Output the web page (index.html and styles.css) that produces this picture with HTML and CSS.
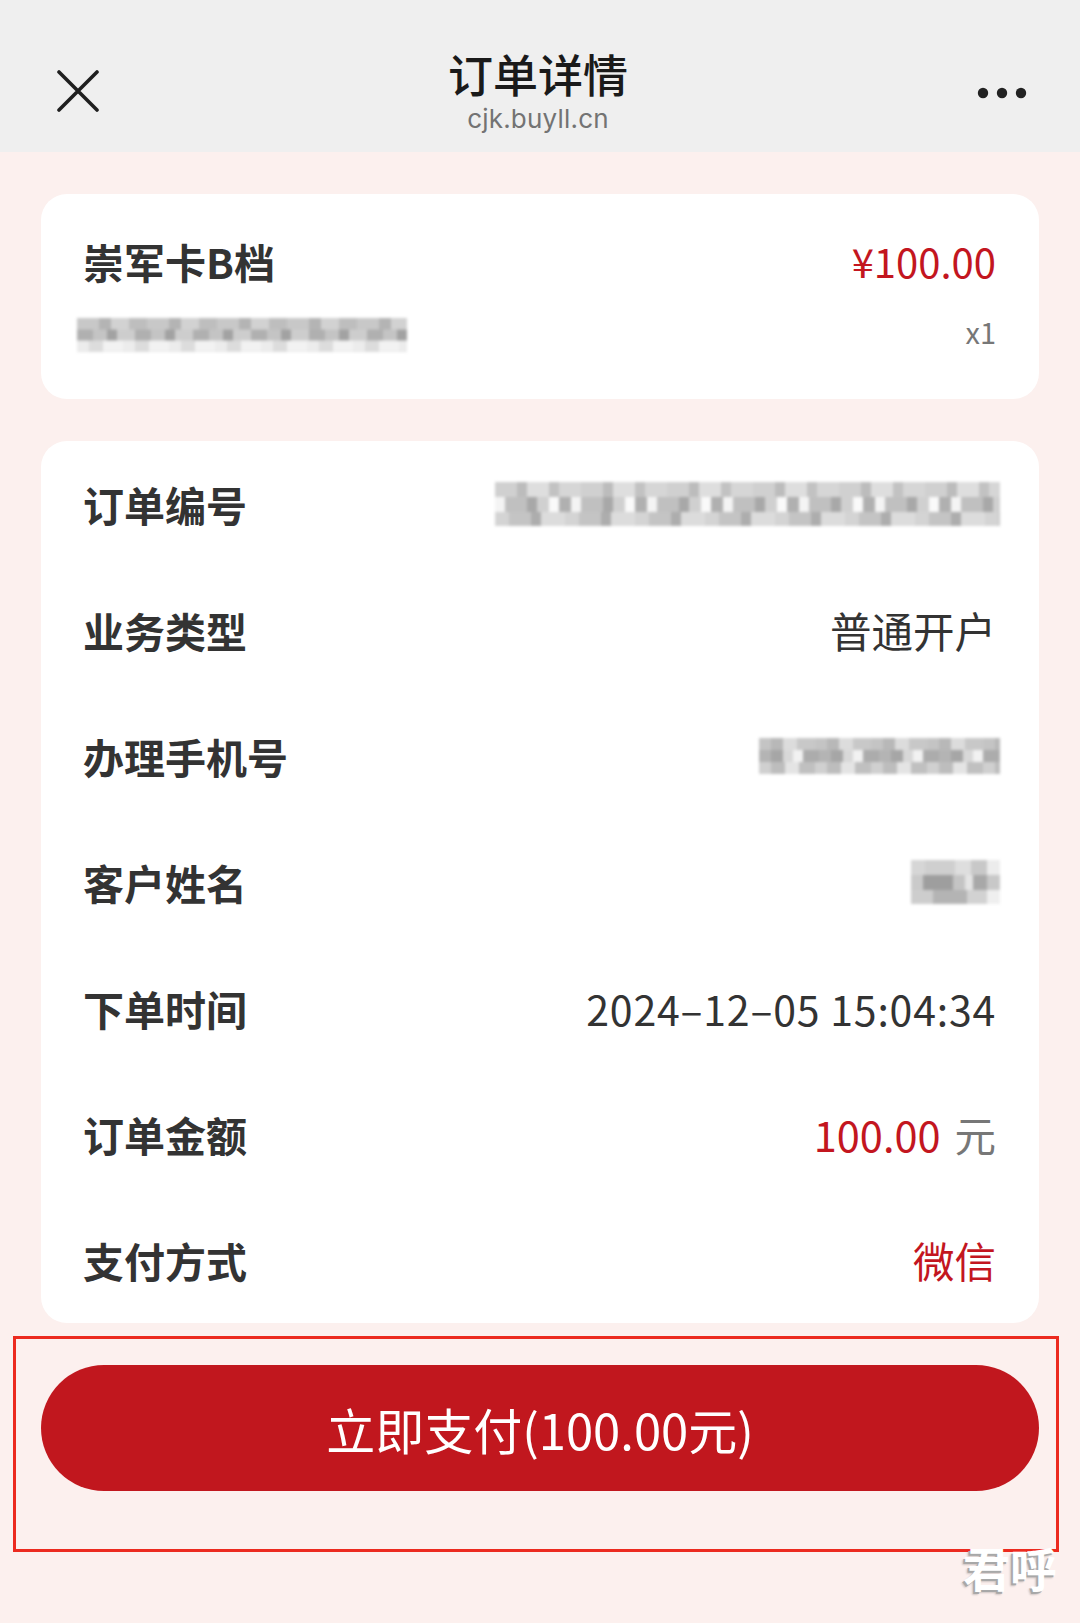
FILE: index.html
```html
<!DOCTYPE html>
<html>
<head>
<meta charset="utf-8">
<title>订单详情</title>
<link rel="stylesheet" href="styles.css">
</head>
<body>

<div class="page">
	<!-- top bar of the webview -->
	<div class="topbar">
		<div class="topbar-left">
			<svg class="close-icon" width="42" height="42" viewBox="0 0 42 42">
				<path d="M2 2 L40 40 M40 2 L2 40" stroke="#1f1f1f" stroke-width="3.6" stroke-linecap="round" fill="none"/>
			</svg>
		</div>
		<div class="topbar-title">
			<div class="title">订单详情</div>
			<div class="subtitle">cjk.buyll.cn</div>
		</div>
		<div class="topbar-right">
			<svg class="more-icon" width="50" height="12" viewBox="0 0 50 12">
				<circle cx="6" cy="6" r="5.2" fill="#222"/>
				<circle cx="25" cy="6" r="5.2" fill="#222"/>
				<circle cx="44" cy="6" r="5.2" fill="#222"/>
			</svg>
		</div>
	</div>

	<div class="content">
		<!-- product card -->
		<div class="card product">
			<div class="product-row">
				<span class="product-name">崇军卡B档</span>
				<span class="product-price">¥100.00</span>
			</div>
			<div class="product-row sub">
				<span class="mosaic mosaic-product"></span>
				<span class="product-qty">x1</span>
			</div>
		</div>

		<!-- order info -->
		<div class="card info">
			<div class="info-row">
				<span class="info-label">订单编号</span>
				<span class="mosaic mosaic-order"></span>
			</div>
			<div class="info-row">
				<span class="info-label">业务类型</span>
				<span class="info-value">普通开户</span>
			</div>
			<div class="info-row">
				<span class="info-label">办理手机号</span>
				<span class="mosaic mosaic-phone"></span>
			</div>
			<div class="info-row">
				<span class="info-label">客户姓名</span>
				<span class="mosaic mosaic-name"></span>
			</div>
			<div class="info-row">
				<span class="info-label">下单时间</span>
				<span class="info-value time">2024–12–05 15:04:34</span>
			</div>
			<div class="info-row">
				<span class="info-label">订单金额</span>
				<span class="info-value"><span class="red">100.00</span><span class="unit">元</span></span>
			</div>
			<div class="info-row">
				<span class="info-label">支付方式</span>
				<span class="info-value red">微信</span>
			</div>
		</div>

		<button class="pay-btn">立即支付(100.00元)</button>
	</div>

	<!-- annotation frame and watermark drawn over the page -->
	<div class="mark-box"></div>
	<div class="watermark">君呼</div>
</div>

</body>
</html>
```

FILE: styles.css
```css
* {
	box-sizing: border-box;
}

body {
	margin: 0;
	background: #fcf0ee;
	font-family: "Noto Sans CJK SC", "Noto Sans", sans-serif;
	color: #2b2b2b;
}

.page {
	position: relative;
	width: 1080px;
	height: 1623px;
	overflow: hidden;
}

/* top bar */
.topbar {
	height: 152px;
	background: #efefef;
	display: grid;
	grid-template-columns: 1fr auto 1fr;
	align-items: center;
	padding: 34px 53px 0 57px;
}

.topbar-left {
	display: flex;
}

.topbar-right {
	display: flex;
	justify-content: flex-end;
}

.close-icon {
	display: block;
	margin-top: -4px;
}

.more-icon {
	display: block;
}

.topbar-title {
	text-align: center;
	margin-left: -8px;
}

.title {
	font-size: 45px;
	line-height: 48px;
	font-weight: 500;
	color: #1a1a1a;
}

.subtitle {
	font-family: "Inter", "Roboto", sans-serif;
	font-size: 26px;
	line-height: 34px;
	margin-top: 4px;
	color: #737373;
	letter-spacing: 0.2px;
}

/* content */
.content {
	padding: 42px 41px 0;
	display: flex;
	flex-direction: column;
	gap: 42px;
}

.card {
	background: #fff;
	border-radius: 26px;
}

.product {
	padding: 43px 43px 44px 42px;
}

.product-row {
	display: flex;
	justify-content: space-between;
	align-items: center;
	height: 48px;
}

.product-row.sub {
	height: 40px;
	margin-top: 30px;
}

.product-name {
	font-size: 41px;
	font-weight: 700;
	color: #333;
}

.product-price {
	font-size: 40px;
	color: #c3161f;
}

.product-qty {
	font-size: 29px;
	color: #777;
	margin-bottom: 8px;
}

.info {
	padding: 0 43px 0 42px;
}

.info-row {
	height: 126px;
	display: flex;
	justify-content: space-between;
	align-items: center;
}

.info-label {
	font-size: 41px;
	font-weight: 700;
	color: #333;
}

.info-value {
	font-size: 41.5px;
	color: #333;
}

.info-value.time {
	font-size: 41px;
	letter-spacing: 0.8px;
}

.red {
	color: #c3161f;
}

.unit {
	color: #777;
	margin-left: 14px;
}

/* blurred placeholders: three rows of grey cells */
.mosaic {
	display: block;
	filter: blur(1.6px);
	background-color: #dedede;
	background-repeat: no-repeat;
	background-size: 100% 34%, 100% 34%, 100% 34%;
	background-position: 0 0, 0 50%, 0 100%;
}

.mosaic-product {
	width: 330px;
	height: 34px;
	margin-left: -6px;
	background-image:
		repeating-linear-gradient(90deg, #c8c8c8 0 22px, #b4b4b4 22px 34px, #d2d2d2 34px 52px, #bebebe 52px 70px),
		repeating-linear-gradient(90deg, #b0b0b0 0 16px, #c4c4c4 16px 30px, #a2a2a2 30px 40px, #cdcdcd 40px 58px),
		repeating-linear-gradient(90deg, #ececec 0 12px, #dcdcdc 12px 26px, #f2f2f2 26px 46px);
}

.mosaic-order {
	width: 505px;
	height: 44px;
	margin-right: -4px;
	background-image:
		repeating-linear-gradient(90deg, #d0d0d0 0 22px, #bcbcbc 22px 32px, #dedede 32px 54px, #c2c2c2 54px 64px, #d6d6d6 64px 86px),
		repeating-linear-gradient(90deg, #f4f4f4 0 10px, #c0c0c0 10px 32px, #a8a8a8 32px 42px, #d0d0d0 42px 54px, #fafafa 54px 64px, #b0b0b0 64px 76px),
		repeating-linear-gradient(90deg, #d4d4d4 0 14px, #c4c4c4 14px 36px, #adadad 36px 46px, #dcdcdc 46px 70px);
}

.mosaic-phone {
	width: 241px;
	height: 36px;
	margin-right: -4px;
	background-image:
		repeating-linear-gradient(90deg, #c4c4c4 0 12px, #b8b8b8 12px 24px, #dcdcdc 24px 38px, #c8c8c8 38px 56px),
		repeating-linear-gradient(90deg, #b4b4b4 0 12px, #a6a6a6 12px 24px, #d8d8d8 24px 34px, #f2f2f2 34px 44px, #acacac 44px 60px),
		repeating-linear-gradient(90deg, #d0d0d0 0 12px, #bdbdbd 12px 26px, #e4e4e4 26px 40px, #c0c0c0 40px 56px);
}

.mosaic-name {
	width: 89px;
	height: 44px;
	margin-right: -4px;
	background-image:
		linear-gradient(90deg, #d6d6d6 0 14px, #cfcfcf 14px 44px, #dedede 44px 60px, #c8c8c8 60px 76px, #ececec 76px 89px),
		linear-gradient(90deg, #cacaca 0 12px, #9e9e9e 12px 42px, #c4c4c4 42px 54px, #e4e4e4 54px 62px, #a8a8a8 62px 76px, #c8c8c8 76px 89px),
		linear-gradient(90deg, #cdcdcd 0 22px, #b4b4b4 22px 56px, #d2d2d2 56px 76px, #efefef 76px 89px);
}

/* pay button */
.pay-btn {
	height: 126px;
	border: none;
	border-radius: 63px;
	background: #c1171e;
	color: #fff;
	font-family: "Noto Sans CJK SC", "Noto Sans", sans-serif;
	font-size: 49px;
	padding: 0;
	cursor: pointer;
}

/* overlays */
.mark-box {
	position: absolute;
	left: 13px;
	top: 1336px;
	width: 1046px;
	height: 216px;
	border: 3px solid #ec2a1f;
}

.watermark {
	position: absolute;
	left: 963px;
	top: 1538px;
	font-size: 47px;
	line-height: 58px;
	font-weight: 700;
	color: #fff;
	text-shadow: -2px 2px 0 #a8a8a8, -3px 3px 2px rgba(0,0,0,0.18);
}
```
